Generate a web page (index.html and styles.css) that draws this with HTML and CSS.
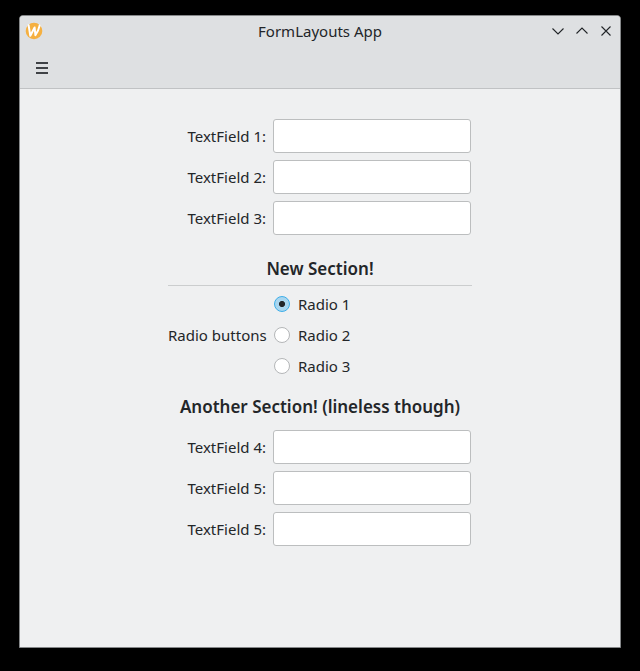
FILE: index.html
```
<!DOCTYPE html>
<html lang="en">
<head>
<meta charset="utf-8">
<title>FormLayouts App</title>
<link rel="stylesheet" href="styles.css">
</head>
<body>
<main class="window">
  <header class="header">
    <div class="titlebar">
      <svg class="app-icon" viewBox="0 0 18 18"><circle cx="9" cy="9" r="8.3" fill="#f5b041"/><path d="M3.600 3.200L5.300 13.800L9.600 5.500L10.400 13.200Q13.500 9 14.600 3.600" fill="none" stroke="#fff" stroke-width="2" stroke-linejoin="round" stroke-linecap="round"/></svg>
      <h1 class="title">FormLayouts App</h1>
      <div class="controls">
        <svg viewBox="0 0 16 16"><path d="M2.500 5.500L8 11L13.500 5.500"/></svg>
        <svg viewBox="0 0 16 16"><path d="M2.500 10.500L8 5L13.500 10.500"/></svg>
        <svg viewBox="0 0 16 16"><path d="M3.500 3.500L12.500 12.500M12.500 3.500L3.500 12.500"/></svg>
      </div>
    </div>
    <div class="toolbar"><svg class="menu" viewBox="0 0 12 12"><path d="M0 1H12M0 6H12M0 11H12"/></svg></div>
  </header>
  <form class="form">
    <label class="label" for="t1">TextField 1:</label><input class="field" id="t1">
    <label class="label" for="t2">TextField 2:</label><input class="field" id="t2">
    <label class="label" for="t3">TextField 3:</label><input class="field" id="t3">
    <h2 class="section lined">New Section!</h2>
    <span class="label group-label">Radio buttons</span>
    <div class="radios">
      <label class="radio"><span class="dot checked"></span>Radio 1</label>
      <label class="radio"><span class="dot"></span>Radio 2</label>
      <label class="radio"><span class="dot"></span>Radio 3</label>
    </div>
    <h2 class="section plain">Another Section! (lineless though)</h2>
    <label class="label" for="t4">TextField 4:</label><input class="field" id="t4">
    <label class="label" for="t5">TextField 5:</label><input class="field" id="t5">
    <label class="label" for="t6">TextField 5:</label><input class="field" id="t6">
  </form>
</main>
</body>
</html>
```
FILE: styles.css
```
* { box-sizing: border-box; }
body { display: flow-root; margin: 0; background: #000; color: #232629; font: 15px/20px "Noto Sans", sans-serif; }
.window { width: 602px; height: 633px; margin: 15px 0 0 19px; border: 1px solid #858789; border-radius: 4px 4px 0 0; background: #eff0f1; overflow: hidden; }
.header { height: 73px; background: #dee0e2; border-bottom: 1px solid #c0c2c4; }
.titlebar { height: 30px; display: grid; grid-template-columns: 80px 1fr 80px; align-items: center; }
.app-icon { width: 18px; height: 18px; margin-left: 5px; }
.title { margin: 0; font-size: 15px; font-weight: 400; text-align: center; }
.controls { display: flex; gap: 8px; justify-content: flex-end; padding-right: 6px; }
.controls svg { width: 16px; height: 16px; fill: none; stroke: #232629; stroke-width: 1.1; }
.toolbar { height: 42px; padding: 16px; }
.menu { display: block; width: 12px; height: 12px; stroke: #3f4246; stroke-width: 2; }
.form { width: 304px; margin: 30px 0 0 148px; display: grid; grid-template-columns: 98px 198px; column-gap: 7px; row-gap: 7px; align-items: center; }
.label { text-align: right; white-space: nowrap; }
.field { width: 198px; height: 34px; border: 1px solid #bcbebf; border-radius: 3px; background: #fff; padding: 6px; font: inherit; outline: none; }
.section { grid-column: 1 / -1; margin: 0; width: 304px; font-size: 17px; line-height: 24px; font-weight: 600; text-align: center; white-space: nowrap; }
.lined { height: 44px; padding-top: 15px; border-bottom: 1px solid #cbcdce; }
.group-label, .radios { margin-top: -1px; }
.group-label { padding-bottom: 1px; }
.radios { display: grid; gap: 7px; }
.radio { height: 24px; display: flex; align-items: center; gap: 8px; }
.dot { width: 16px; height: 16px; margin-left: 1px; border: 1px solid #b4b6b8; border-radius: 50%; background: #fff; }
.checked { border-color: #3daee9; background: radial-gradient(circle, #232629 0 2.700px, #a9d6ef 3.400px); }
.plain { height: 38px; padding-top: 10px; }
```
